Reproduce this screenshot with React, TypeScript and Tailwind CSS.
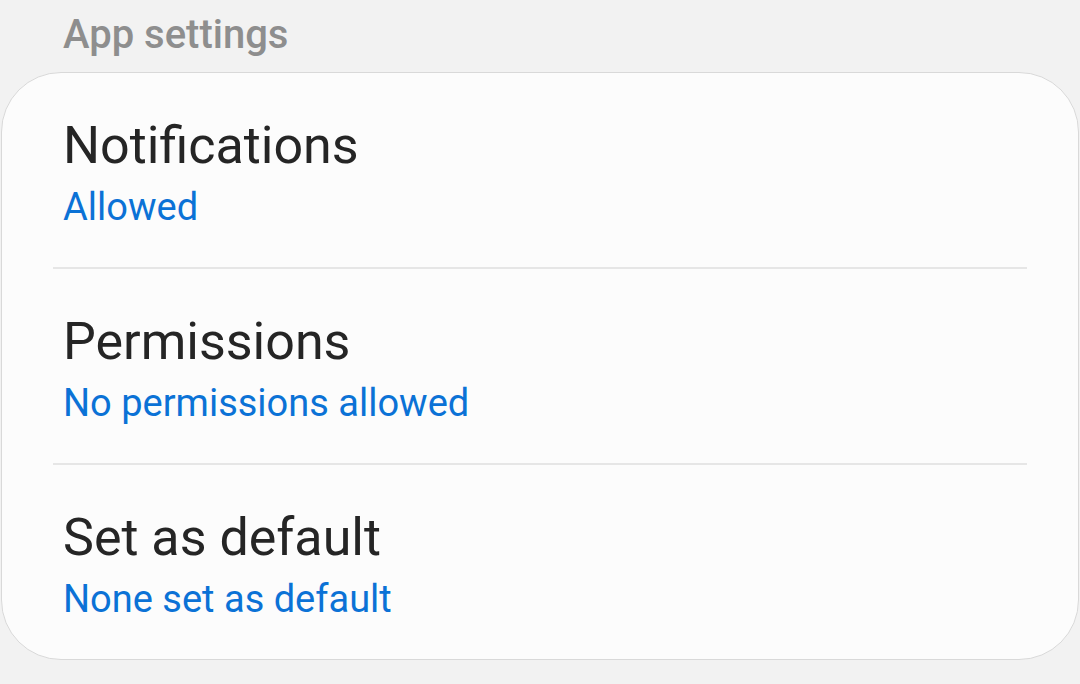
const rows = [
  { title: "Notifications", sub: "Allowed" },
  { title: "Permissions", sub: "No permissions allowed" },
  { title: "Set as default", sub: "None set as default" },
];

export default function App() {
  return (
    <div className="h-[684px] w-[1080px] overflow-hidden bg-[#f2f2f2] font-['Roboto',sans-serif]">
      <div className="h-[72px] pl-[63px] pt-[13px] text-[40px] leading-[44px] font-medium text-[#8e8e8e]">
        App settings
      </div>
      <div className="mx-[1px] rounded-[60px] border border-[#d9d9d9] bg-[#fcfcfc]">
        {rows.map((r, i) => (
          <div key={r.title}>
            {i > 0 && <div className="mx-[51px] h-[2px] bg-[#e6e6e6]" />}
            <div className="h-[194px] px-[61px] pt-[45px]">
              <div className="text-[52px] leading-[56px] text-[#252525]">{r.title}</div>
              <div className="mt-[5px] text-[38px] leading-[56px] text-[#0b72d6]">{r.sub}</div>
            </div>
          </div>
        ))}
      </div>
    </div>
  );
}
